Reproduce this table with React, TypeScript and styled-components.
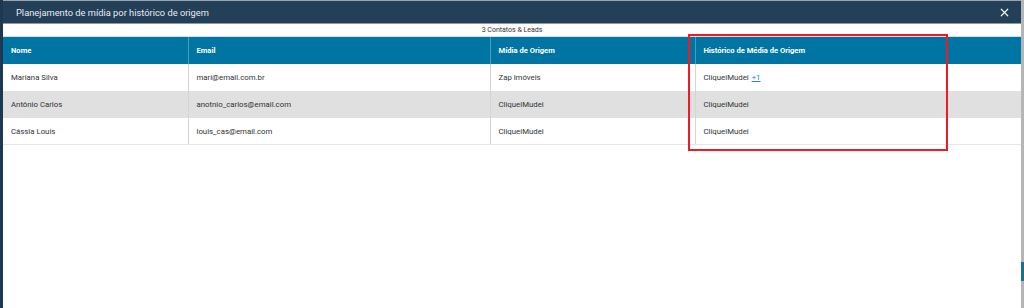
import React from "react";
import styled, { createGlobalStyle } from "styled-components";
import { X } from "lucide-react";

interface Lead {
  name: string;
  email: string;
  origin: string;
  history: string;
  extra?: number;
}

const leads: Lead[] = [
  { name: "Mariana Silva", email: "mari@email.com.br", origin: "Zap imóveis", history: "CliqueiMudei", extra: 1 },
  { name: "Antônio Carlos", email: "anotnio_carlos@email.com", origin: "CliqueiMudei", history: "CliqueiMudei" },
  { name: "Cássia Louis", email: "louis_cas@email.com", origin: "CliqueiMudei", history: "CliqueiMudei" },
];

const App: React.FC = () => {
  return (
    <Page>
      <GlobalStyle />
      <Modal>
        <Header>
          <Title>Planejamento de mídia por histórico de origem</Title>
          <CloseButton aria-label="Fechar">
            <X size={13} strokeWidth={2.2} />
          </CloseButton>
        </Header>
        <Counter>3 Contatos &amp; Leads</Counter>
        <Table>
          <colgroup>
            <col style={{ width: 185 }} />
            <col style={{ width: 302 }} />
            <col style={{ width: 205 }} />
            <col />
          </colgroup>
          <thead>
            <tr>
              <Th>Nome</Th>
              <Th>Email</Th>
              <Th>Mídia de Origem</Th>
              <Th>Histórico de Média de Origem</Th>
            </tr>
          </thead>
          <tbody>
            {leads.map((lead, i) => (
              <Row key={lead.email} $striped={i % 2 === 1}>
                <Td>{lead.name}</Td>
                <Td>{lead.email}</Td>
                <Td>{lead.origin}</Td>
                <Td>
                  {lead.history}
                  {lead.extra ? <More href="#">+{lead.extra}</More> : null}
                </Td>
              </Row>
            ))}
          </tbody>
        </Table>
      </Modal>
      <Rail />
      <Highlight />
    </Page>
  );
};

const GlobalStyle = createGlobalStyle`
  body {
    margin: 0;
    font-family: Roboto, "Liberation Sans", sans-serif;
    background: #1d3850;
  }
`;

const Page = styled.div`
  position: relative;
  display: flex;
  height: 308px;
  padding-left: 3px;
  background: #1d3850;
  overflow: hidden;
`;

const Modal = styled.div`
  flex: 1;
  display: flex;
  flex-direction: column;
  background: #fff;
  border-top: 1px solid #9aa4ad;
`;

const Header = styled.div`
  height: 22px;
  display: flex;
  align-items: center;
  justify-content: space-between;
  padding: 0 10px 0 13px;
  background: #243f58;
  border-bottom: 1px solid #8d98a3;
`;

const Title = styled.h1`
  margin: 0;
  font-size: 9.3px;
  font-weight: 400;
  color: #e6ebf0;
`;

const CloseButton = styled.button`
  display: flex;
  padding: 0;
  border: 0;
  background: none;
  color: #f2f4f6;
  cursor: pointer;
`;

const Counter = styled.div`
  height: 12px;
  line-height: 13px;
  text-align: center;
  font-size: 7px;
  color: #333;
  border-bottom: 1px solid #d6dde3;
`;

const Table = styled.table`
  width: 100%;
  border-collapse: collapse;
  table-layout: fixed;
`;

const Th = styled.th`
  height: 27px;
  padding: 0 0 0 8px;
  text-align: left;
  font-size: 7.6px;
  font-weight: 700;
  color: #fff;
  background: #0074a2;
  border-left: 1px solid #4a9cbd;
  &:first-child {
    border-left: 0;
  }
`;

const Row = styled.tr<{ $striped: boolean }>`
  background: ${(p) => (p.$striped ? "#e0e0e0" : "#fff")};
  &:last-child td {
    height: 26px;
    border-bottom: 1px solid #e6e6e6;
  }
`;

const Td = styled.td`
  height: 27px;
  padding: 0 0 0 8px;
  font-size: 7.8px;
  color: #333;
  border-left: 1px solid #d4d4d4;
  &:first-child {
    border-left: 0;
  }
`;

const More = styled.a`
  margin-left: 3px;
  color: #2b7fb8;
  text-decoration: underline;
`;

const Rail = styled.div`
  width: 3px;
  background: linear-gradient(
    to bottom,
    #b5b5b5 262px,
    #1e6f8c 262px,
    #1e6f8c 281px,
    #b5b5b5 281px
  );
`;

const Highlight = styled.div`
  position: absolute;
  left: 688px;
  top: 34px;
  width: 256px;
  height: 113px;
  border: 2px solid #ec1c24;
  pointer-events: none;
`;

export default App;
